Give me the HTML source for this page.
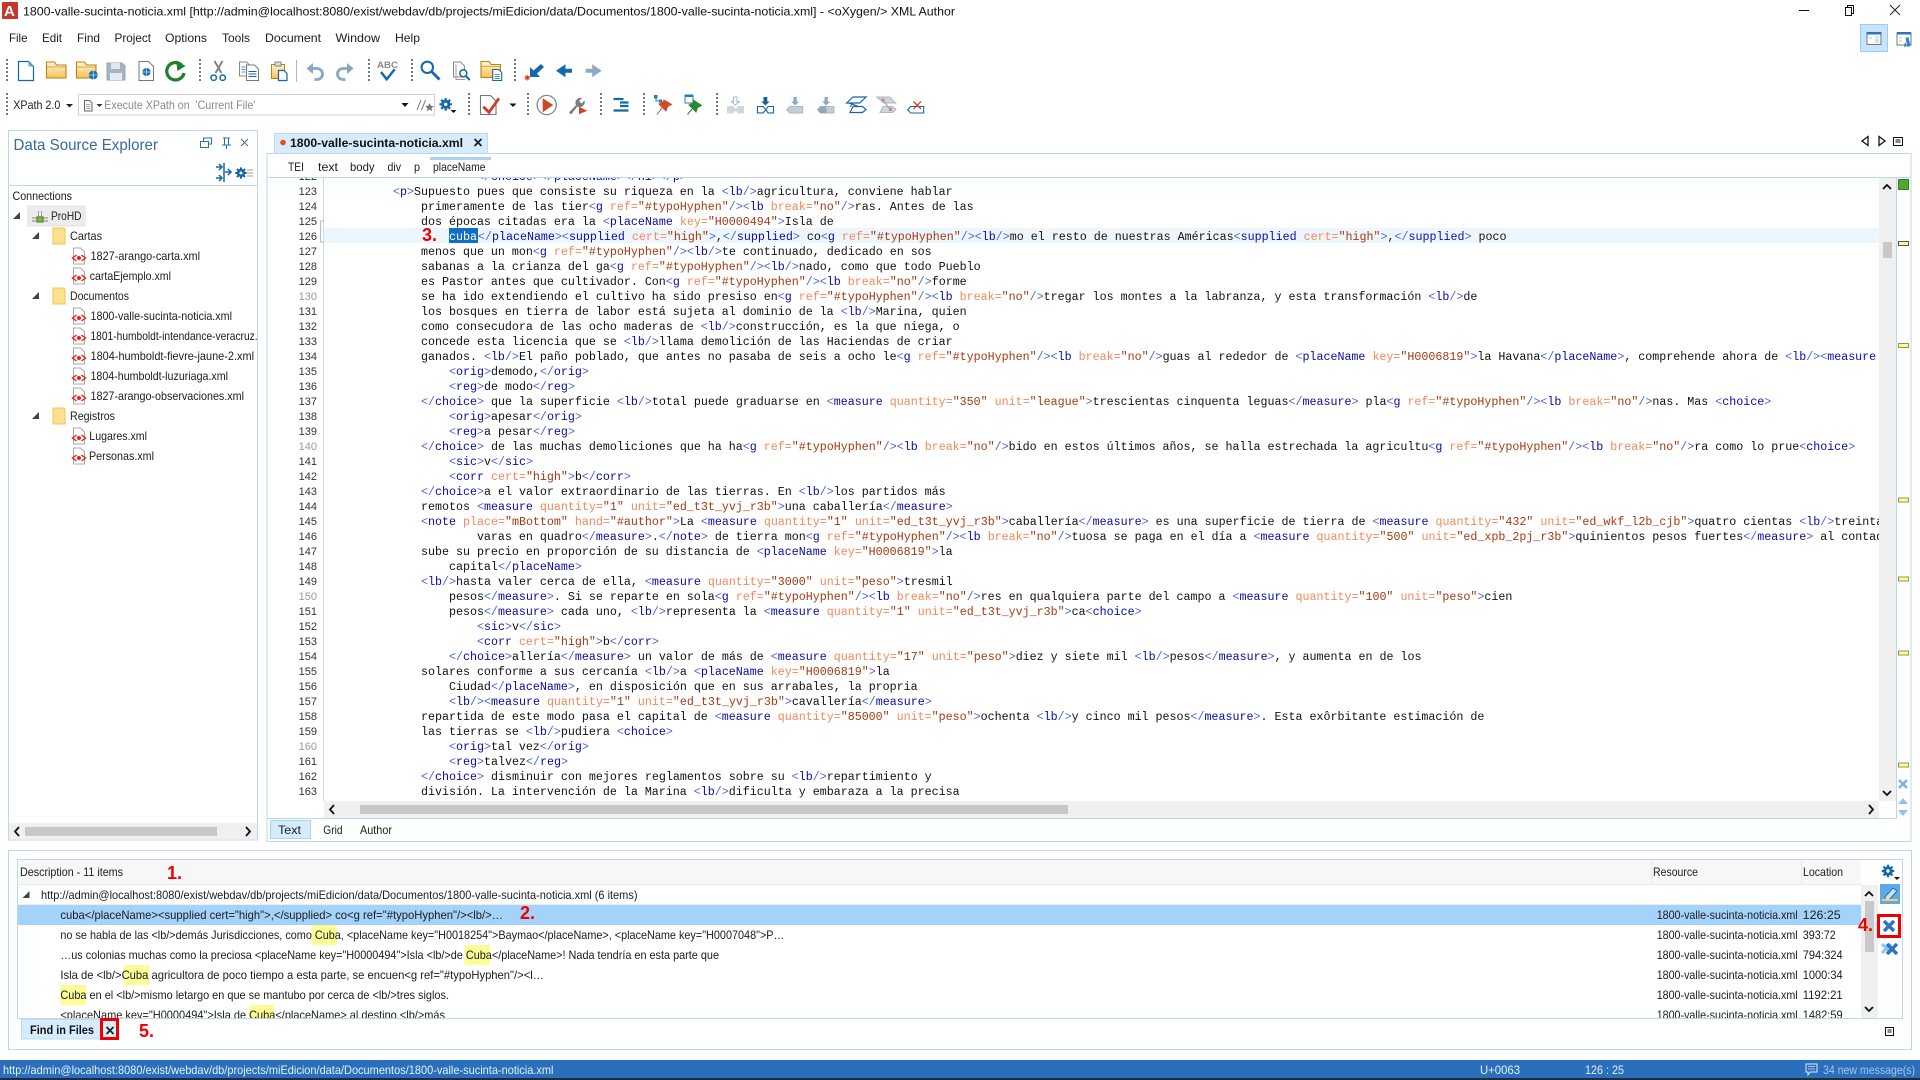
<!DOCTYPE html>
<html><head><meta charset="utf-8"><title>oXygen XML Author</title>
<style>
html,body{margin:0;padding:0;background:#fff;width:1920px;height:1080px;overflow:hidden}
svg{position:absolute;left:0;top:0}
svg text{font-family:"Liberation Sans",sans-serif;font-size:12px;fill:#222;white-space:pre}
.bd{fill:none;stroke:#bcd7ee;stroke-width:1}
.wb text{fill:#1c1c1c}
#code,#nums{position:absolute;top:178px;height:623px;overflow:hidden}
#code{left:324px;width:1555px;font:11.67px/19px "Liberation Mono",monospace;color:#111}
#code>div{height:15px;padding-left:69px;white-space:pre}
#cur{position:absolute;left:0;top:50px;width:1555px;height:15px;background:#eef6fd;padding:0!important}
#code>div.f{margin-top:-10px}
#code div{position:relative}
#code>#cur{position:absolute}
#code u,#code b,#code i,#code s{text-decoration:none;font-weight:normal;font-style:normal}
#code u{color:#4a66d6}#code b{color:#0a0aa8}#code i{color:#f5875a}#code s{color:#a33a12}
#code em{font-style:normal;background:#0f6fc6;color:#fff;display:inline-block;height:15px;width:29px;line-height:19px;vertical-align:top}
#nums{left:267px;width:50px;font:11px/18px "Liberation Sans",sans-serif;color:#333;text-align:right}
#nums div{height:15px}#nums div.f{margin-top:-10px}#nums .g{color:#999}
</style></head><body>

<svg width="1920" height="1080" viewBox="0 0 1920 1080">
<defs>
<linearGradient id="fg" x1="0" y1="0" x2="0" y2="1"><stop offset="0" stop-color="#fff4d6"/><stop offset="1" stop-color="#f6c25a"/></linearGradient>
<clipPath id="ct"><rect x="9" y="186" width="248" height="637"/></clipPath>
<g id="grip"><path d="M0 0V22" stroke="#777" stroke-width="2" stroke-dasharray="2 2" fill="none"/></g>
<g id="folder"><path d="M-9.500-8.500h8l2 3h9.500v13h-19.500z" fill="url(#fg)" stroke="#b8860b" stroke-width="1.100"/><path d="M-9-3.500h18.500" stroke="#c99a2a" stroke-width=".8"/></g>
<g id="tfold"><path d="M-6-8h11l1 1v15h-12z" fill="#fde08e" stroke="#efc552"/></g>
<g id="xf"><path d="M-5-8h7l4 4v12h-11z" fill="#fff" stroke="#a8a8a8"/><path d="M-2-1l-4 3 4 3M3-1l4 3-4 3" fill="none" stroke="#e8201c" stroke-width="1.400"/><circle cx="0.500" cy="2" r="2" fill="#e8201c"/></g>
<g id="tri"><path d="M-4 3h7v-7z" fill="#444"/></g>
<g id="glob"><circle r="4.500" fill="#1f6cb0"/><path d="M-4.500 0h9M0-4.500v9" stroke="#bfe0f7" stroke-width=".8"/></g>
<g id="xb"><path d="M-5-5L5 5M5-5L-5 5" stroke="#2f74c0" stroke-width="3.400"/></g>
<g id="gear"><path d="M0-6.300V6.300M-6.300 0H6.300M-4.500-4.500L4.500 4.500M4.500-4.500L-4.500 4.500" stroke="#1468a8" stroke-width="2.200"/><circle r="4.600" fill="#1468a8"/><circle r="1.700" fill="#fff"/></g>
</defs>

<!-- title bar -->
<rect x="2" y="2" width="16" height="17" fill="#c8352a" rx="1"/>
<text x="4" y="16" style="font-size:15px;font-weight:bold;fill:#fff">A</text>
<text x="23" y="15.500" textLength="932" lengthAdjust="spacingAndGlyphs" style="fill:#111">1800-valle-sucinta-noticia.xml [http://admin@localhost:8080/exist/webdav/db/projects/miEdicion/data/Documentos/1800-valle-sucinta-noticia.xml] - &lt;oXygen/&gt; XML Author</text>
<path d="M1799 10.500h10" stroke="#111"/>
<path d="M1845.500 7.500h6v8h-6zM1847.500 7.500v-2h6v8h-2" fill="none" stroke="#111"/>
<path d="M1890 5l10 10M1900 5l-10 10" stroke="#222"/>

<!-- menu -->
<g class="wb">
<text x="9" y="42" textLength="18.500" lengthAdjust="spacingAndGlyphs">File</text>
<text x="42" y="42" textLength="20" lengthAdjust="spacingAndGlyphs">Edit</text>
<text x="77" y="42" textLength="23" lengthAdjust="spacingAndGlyphs">Find</text>
<text x="114.500" y="42" textLength="36.500" lengthAdjust="spacingAndGlyphs">Project</text>
<text x="165" y="42" textLength="42" lengthAdjust="spacingAndGlyphs">Options</text>
<text x="222" y="42" textLength="28" lengthAdjust="spacingAndGlyphs">Tools</text>
<text x="265" y="42" textLength="56" lengthAdjust="spacingAndGlyphs">Document</text>
<text x="335.500" y="42" textLength="44.500" lengthAdjust="spacingAndGlyphs">Window</text>
<text x="395" y="42" textLength="25" lengthAdjust="spacingAndGlyphs">Help</text>
</g>

<!-- toolbar 1 -->
<use href="#grip" x="7" y="59"/><use href="#grip" x="200" y="59"/><use href="#grip" x="369" y="59"/><use href="#grip" x="412" y="59"/><use href="#grip" x="515" y="59"/>
<path d="M296.500 60v22" stroke="#b5b5b5"/>
<path d="M18.500 61.500h10l5 5v14h-15z" fill="#fff" stroke="#1468a8" stroke-width="1.200"/><path d="M28.500 61.500v5h5z" fill="#6fa8d6"/>
<use href="#folder" x="56" y="70.500"/>
<use href="#folder" x="86" y="70.500"/><use href="#glob" x="93.300" y="75"/>
<path d="M107 63h15l3 3v14h-18z" fill="#a3b4c4" stroke="#94a6b7"/><rect x="111" y="63" width="9" height="6" fill="#dfe6ec"/><rect x="110" y="73" width="12" height="7" fill="#e6ebf0"/>
<path d="M139 61.500h9.500l5 5v14h-14.500z" fill="#fff" stroke="#777"/><use href="#glob" x="146.500" y="72" transform="translate(14.650 7.200) scale(.9)"/>
<path d="M181.500 65a8.700 8.700 0 1 0 2.500 8" fill="none" stroke="#1f7f2e" stroke-width="3.200"/><path d="M176 60.500l9.500 5.500-8 5z" fill="#1f7f2e"/>
<path d="M215.500 73l7-12M221.500 73l-7-12" stroke="#7d7d7d" stroke-width="1.800"/><circle cx="213.700" cy="77.700" r="2.700" fill="none" stroke="#1468a8" stroke-width="1.500"/><circle cx="222.700" cy="77.700" r="2.700" fill="none" stroke="#1468a8" stroke-width="1.500"/>
<path d="M239.500 62h7l3 3v11h-10z" fill="#fff" stroke="#888"/><path d="M241.500 67h4M241.500 69.500h4M241.500 72h4" stroke="#1468a8" stroke-width=".8"/><path d="M246.500 65h8l4 4v11.500h-12z" fill="#fff" stroke="#777"/><path d="M248.500 71.500h8M248.500 74h8M248.500 76.500h8" stroke="#1468a8"/>
<path d="M271.500 64.500h13v14h-13z" fill="url(#fg)" stroke="#b8860b"/><rect x="275" y="62" width="6" height="4" fill="#ddd" stroke="#888"/><path d="M278.500 70.500h5.500l3 3v7h-8.500z" fill="#fff" stroke="#1468a8" stroke-width="1.200"/>
<path d="M310 68.500h6.500a5.500 5.500 0 0 1 1 11h-3" fill="none" stroke="#8aa7bf" stroke-width="2.800"/><path d="M306.500 68.500l6.500-5.500v11z" fill="#8aa7bf"/>
<path d="M350 68.500h-6.500a5.500 5.500 0 0 0-1 11h3" fill="none" stroke="#8aa7bf" stroke-width="2.800"/><path d="M353.500 68.500l-6.500-5.500v11z" fill="#8aa7bf"/>
<text x="377" y="68" style="font-size:9.500px;font-weight:bold;fill:#8a8a8a" textLength="21" lengthAdjust="spacingAndGlyphs">ABC</text>
<path d="M381 72l5.700 7.300 8-10" fill="none" stroke="#1468a8" stroke-width="2.400"/>
<circle cx="427.300" cy="67.300" r="5.700" fill="#fff" stroke="#1468a8" stroke-width="2"/><path d="M431.500 71.500l8 8" stroke="#1468a8" stroke-width="2.800"/>
<path d="M453.500 62h7l4 4v11h-11z" fill="#fff" stroke="#888"/><path d="M456 64.500v15h9" fill="none" stroke="#999"/><circle cx="463.300" cy="73.300" r="3.500" fill="#fff" stroke="#1468a8" stroke-width="1.500"/><path d="M465.800 76l4 4" stroke="#1468a8" stroke-width="2"/>
<use href="#folder" x="490.500" y="70.500" transform="translate(0 -.5)"/><path d="M492.700 69.500h6l3 3v8h-9z" fill="#fff" stroke="#1468a8" stroke-width="1.100"/><path d="M494.700 74.500h5M494.700 76.500h5M494.700 78.500h5" stroke="#1468a8" stroke-width=".8"/>
<path d="M541 64l3 3-7 6.500 3 3.500h-10v-10l3.500 3.500z" fill="#1468a8"/><path d="M524.500 77.700h5.500M527.300 75v5.500M525.300 75.700l4 4M529.300 75.700l-4 4" stroke="#d6392c"/>
<path d="M556 70.700l9.500-6.500v4.500h6.500v4h-6.500v4.500z" fill="#1468a8"/>
<path d="M601.700 70.700l-9.500-6.500v4.500h-6.500v4h6.500v4.500z" fill="#8fa9bf"/>

<!-- perspective buttons -->
<rect x="1860.500" y="24.500" width="27" height="27" fill="#c9e5fd" stroke="#94cffc"/>
<rect x="1867" y="32.500" width="14" height="12" fill="#fff" stroke="#777"/><rect x="1867" y="32" width="14" height="2.500" fill="#2f74c0"/><path d="M1869 38h3M1875 37h4M1875 40h4M1875 42h4" stroke="#9cc7ea"/>
<rect x="1897" y="33" width="14" height="12" fill="#fff" stroke="#777"/><rect x="1897" y="32" width="14" height="2.500" fill="#2f74c0"/><path d="M1899 38h3M1899 41h3" stroke="#9cc7ea"/><path d="M1905.500 38l3-1 2 9-3 1zM1905 42l-1 5 3-1z" fill="#3a7fd0"/>

<!-- toolbar 2 -->
<use href="#grip" x="7" y="93"/>
<text x="13.300" y="109" textLength="47" lengthAdjust="spacingAndGlyphs">XPath 2.0</text>
<path d="M66 104h7l-3.500 3.500z" fill="#222"/>
<rect x="78.500" y="94.500" width="356" height="20.500" fill="#fff" stroke="#d2d2d2"/>
<path d="M84.500 100.500h5l2.500 2.500v8h-7.500z" fill="#fff" stroke="#666"/><path d="M86 104.500h4.500M86 106.500h4.500M86 108.500h4.500" stroke="#888" stroke-width=".7"/>
<path d="M96.500 104h6l-3 3z" fill="#333"/>
<text x="104.300" y="109" textLength="151" lengthAdjust="spacingAndGlyphs" style="fill:#8a8a8a">Execute XPath on  'Current File'</text>
<path d="M401.500 103h7l-3.500 4z" fill="#111"/>
<path d="M417 110l4-10M421.500 110l4-10" stroke="#777"/><path d="M429.500 103l1.300 2.800 3 .3-2.300 2 .7 3-2.700-1.600-2.700 1.600.7-3-2.300-2 3-.3z" fill="#777"/>
<use href="#gear" x="445.700" y="104.300"/><path d="M450.500 110h6l-3 3z" fill="#111"/>
<use href="#grip" x="469" y="93"/><use href="#grip" x="528" y="93"/><use href="#grip" x="601" y="93"/><use href="#grip" x="644" y="93"/><use href="#grip" x="717" y="93"/>
<path d="M480.500 95.500h10l5.500 5.500v13.500h-15.500z" fill="#fff" stroke="#777" stroke-width="1.100"/>
<path d="M483.300 106.700l5.700 5.600 10-14" fill="none" stroke="#d33a2a" stroke-width="2.800"/>
<path d="M509.500 103.500h7l-3.500 3.500z" fill="#111"/>
<circle cx="546.700" cy="105" r="9.600" fill="#fff" stroke="#888" stroke-width="1.300"/><path d="M542.700 98.300l10.600 6.700-10.600 7.300z" fill="#c9482a"/>
<path d="M569 112.500l7-7.500a5 5 0 0 1 6-7l-3 3 2.500 2.500 3-3a5 5 0 0 1-7 6l-6.500 8z" fill="#7d7d7d"/><path d="M579 106.700l8.300 4-8.300 3.600z" fill="#c9482a"/>
<path d="M613.500 99h10M620 102.500h8.500M620 106h8.500M613.500 110.500h15" stroke="#1468a8" stroke-width="2.200"/>
<path d="M654 95h3.500v3.500H654zM659 99.500h3v3h-3z" fill="#2c78b8"/><path d="M656 98v3h3" fill="none" stroke="#2c78b8"/>
<path d="M664 100l7.500 4.500-4 2-1.500 4.500-7-7 3.500-1.500zM662 108l-5 6.500" fill="#d2492a" stroke="#d2492a"/>
<rect x="685" y="95" width="8" height="8" fill="#fff" stroke="#2c78b8"/><path d="M685 95h8v2h-8z" fill="#2c78b8"/>
<path d="M694 100.500l7.500 5-4 2-1.500 4.500-7-7 3.500-1.500zM692 109l-4.500 5.500" fill="#2b8a30" stroke="#2b8a30"/>
<!-- change tracking icons -->
<path d="M733.500 97h3.500v4.500h2.200l-3.900 3.700-3.900-3.700h2.100z" fill="#fff" stroke="#a9b9c6"/>
<path d="M727.500 106.500h5.500l3 3.200-3 3.200h-5.500zM743.500 106.500h-5.500l-2 3.200 2 3.200h5.500z" fill="#cfd8df" stroke="#cfd8df"/>
<path d="M763.500 97h3.800v4.500h2.300l-4.200 4-4.200-4h2.300z" fill="#1c5f97"/>
<path d="M757.500 106.500h5.500l3 3.200-3 3.200h-5.500zM773.500 106.500h-5.500l-2 3.200 2 3.200h5.500z" fill="#fff" stroke="#1468a8" stroke-width="1.100"/>
<path d="M793.500 97h3.300v4.500h2.300l-4 4-4-4h2.400z" fill="#8fa7ba"/>
<path d="M786.700 109.700l3-3.200h13v6.500h-13z" fill="#c3ced7" stroke="#a9b9c6"/>
<path d="M824.500 97h3.300v4.500h2.300l-4 4-4-4h2.400z" fill="#8fa7ba"/>
<path d="M817.500 109.700l3-3.200h13.500v6.500h-13.500z" fill="#c3ced7" stroke="#a9b9c6"/><path d="M817.500 109.700l3-3.200h6v6.500h-6z" fill="#8fa7ba"/>
<path d="M846.700 103h13l6.300-6h-13zM849 103l10 3.700M853 106.500h9.500l3.500 3-3.500 3H850z" fill="none" stroke="#1468a8" stroke-width="1.200"/><path d="M853 103l-3 4" stroke="#1468a8"/>
<path d="M876.700 97h13l6 6h-12zM883 106.500h9.500l3.500 3-3.500 3H880z" fill="#cdd6dd" stroke="#a9b9c6"/><path d="M883 100l7.500 10" stroke="#c99" stroke-width="1.200"/><rect x="881.500" y="98.500" width="3" height="3" fill="#bf8c82"/><rect x="889" y="108" width="3" height="3" fill="#bf8c82"/>
<path d="M907.700 109.700l3-3.200h13v6.500h-13z" fill="#fff" stroke="#1468a8" stroke-width="1.100"/><path d="M913.500 101.500l7.500 7.500M921 101.500l-7.500 7.500" stroke="#d9402c" stroke-width="1.300"/>

<!-- Data Source Explorer -->
<rect class="bd" x="8.500" y="130.500" width="249" height="709.500"/>
<path d="M9 185.500h248" stroke="#bcd7ee"/>
<text x="13.500" y="150" textLength="144.500" lengthAdjust="spacingAndGlyphs" style="font-size:16px;fill:#356a9b">Data Source Explorer</text>
<path d="M200.500 141.500h8v6h-8zM203.500 141v-3h8v6h-3" fill="none" stroke="#2f6ea5"/>
<path d="M223 138h7M224.500 138v7h4v-7M222 145h9M226.500 145v4" fill="none" stroke="#2f6ea5"/>
<path d="M241 139l7 7M248 139l-7 7" stroke="#3f6f98"/>
<path d="M216 167h6M219 164l3 3-3 3M216 178h6M219 175l3 3-3 3M224 163v19" fill="none" stroke="#1468a8" stroke-width="1.500"/><path d="M225 172h5M228 169l3 3-3 3" fill="none" stroke="#1468a8" stroke-width="1.500"/>
<use href="#gear" x="241" y="173" transform="translate(24.100 17.300) scale(.9)"/><path d="M247 170h6M247 173h6M247 176h6" stroke="#999"/>
<g class="wb" clip-path="url(#ct)">
<text x="12.500" y="200" textLength="59.500" lengthAdjust="spacingAndGlyphs">Connections</text>
<rect x="28" y="206" width="57" height="20" fill="#ececec" stroke="#e2e2e2"/>
<use href="#tri" x="17" y="216"/><use href="#tri" x="36" y="236"/><use href="#tri" x="36" y="296"/><use href="#tri" x="36" y="416"/>
<path d="M32 218h16M32 221h16" stroke="#999" stroke-width="1.200"/><path d="M38.500 211v7M41.500 211v7" stroke="#999"/><rect x="37" y="217" width="6" height="5" fill="#8ab045" stroke="#4f7a1a"/>
<text x="51" y="220" textLength="30.500" lengthAdjust="spacingAndGlyphs">ProHD</text>
<use href="#tfold" x="59" y="236"/><text x="70" y="240" textLength="32" lengthAdjust="spacingAndGlyphs">Cartas</text>
<use href="#xf" x="78.500" y="256"/><text x="90.500" y="260" textLength="109.500" lengthAdjust="spacingAndGlyphs">1827-arango-carta.xml</text>
<use href="#xf" x="78.500" y="276"/><text x="89.700" y="280" textLength="81.300" lengthAdjust="spacingAndGlyphs">cartaEjemplo.xml</text>
<use href="#tfold" x="59" y="296"/><text x="70" y="300" textLength="59" lengthAdjust="spacingAndGlyphs">Documentos</text>
<use href="#xf" x="78.500" y="316"/><text x="90.500" y="320" textLength="141.500" lengthAdjust="spacingAndGlyphs">1800-valle-sucinta-noticia.xml</text>
<use href="#xf" x="78.500" y="336"/><text x="90.500" y="340" textLength="183" lengthAdjust="spacingAndGlyphs">1801-humboldt-intendance-veracruz.xml</text>
<use href="#xf" x="78.500" y="356"/><text x="90.500" y="360" textLength="163.500" lengthAdjust="spacingAndGlyphs">1804-humboldt-fievre-jaune-2.xml</text>
<use href="#xf" x="78.500" y="376"/><text x="90.500" y="380" textLength="137.500" lengthAdjust="spacingAndGlyphs">1804-humboldt-luzuriaga.xml</text>
<use href="#xf" x="78.500" y="396"/><text x="90.500" y="400" textLength="153.500" lengthAdjust="spacingAndGlyphs">1827-arango-observaciones.xml</text>
<use href="#tfold" x="59" y="416"/><text x="70" y="420" textLength="45" lengthAdjust="spacingAndGlyphs">Registros</text>
<use href="#xf" x="78.500" y="436"/><text x="89.300" y="440" textLength="57.700" lengthAdjust="spacingAndGlyphs">Lugares.xml</text>
<use href="#xf" x="78.500" y="456"/><text x="89" y="460" textLength="65" lengthAdjust="spacingAndGlyphs">Personas.xml</text>
</g>
<rect x="9" y="823" width="248" height="16" fill="#f0f0f0"/><rect x="25" y="827" width="192" height="9" fill="#c8c8c8"/>
<path d="M19 827l-4 4.500 4 4.500M246 827l4 4.500-4 4.500" fill="none" stroke="#111" stroke-width="1.800"/>

<!-- Editor frame -->
<rect x="274.500" y="133.500" width="213" height="20" fill="#d6ecfd" stroke="#bcdcf5"/>
<circle cx="283" cy="142.500" r="2.800" fill="#ee4a1a"/>
<text x="290" y="147" textLength="173" lengthAdjust="spacingAndGlyphs" style="font-weight:bold;fill:#111">1800-valle-sucinta-noticia.xml</text>
<path d="M474.500 139l7 7M481.500 139l-7 7" stroke="#222" stroke-width="1.800"/>
<path d="M1862 141l6-4.500v9zM1879 136.500v9l6-4.500z" fill="none" stroke="#111" stroke-width="1.300"/>
<path d="M1893.500 137.500h9v8h-9zM1895.500 140h5M1895.500 142h5" fill="none" stroke="#111"/>
<rect class="bd" x="267" y="153.500" width="1644" height="688"/>
<path d="M267 177.500h1644" stroke="#bcd7ee"/>
<g class="wb">
<text x="288" y="171" textLength="16" lengthAdjust="spacingAndGlyphs">TEI</text>
<text x="318" y="171" textLength="20" lengthAdjust="spacingAndGlyphs">text</text>
<text x="350" y="171" textLength="24.500" lengthAdjust="spacingAndGlyphs">body</text>
<text x="387.500" y="171" textLength="13.500" lengthAdjust="spacingAndGlyphs">div</text>
<text x="414" y="171" textLength="6" lengthAdjust="spacingAndGlyphs">p</text>
<text x="433" y="171" textLength="52.500" lengthAdjust="spacingAndGlyphs">placeName</text>
</g>
<rect x="430" y="157" width="61" height="3" fill="#a9d3f5"/>
<path d="M323.500 178V801" stroke="#c8dcee"/>
<path d="M324 221h-3.500v21h3.500" fill="none" stroke="#bbb"/>

<!-- editor scrollbars -->
<rect x="1879" y="178" width="17" height="623" fill="#f0f0f0"/>
<rect x="1883" y="242" width="9" height="16" fill="#c8c8c8"/>
<path d="M1883 189l4-4 4 4M1883 791l4 4 4-4" fill="none" stroke="#111" stroke-width="1.800"/>
<rect x="324" y="801" width="1555" height="17" fill="#f0f0f0"/>
<rect x="360" y="805" width="708" height="9" fill="#c8c8c8"/>
<path d="M334 805l-4 4.500 4 4.500M1869 805l4 4.500-4 4.500" fill="none" stroke="#111" stroke-width="1.800"/>
<path d="M1896.500 178V818M267 818.500H1897" stroke="#bcd7ee"/>
<rect x="1898.500" y="179.500" width="10" height="10" fill="#4fa92a" stroke="#3a7d1e"/>
<g fill="#fdf8a0" stroke="#9a9340">
<rect x="1898.500" y="241.500" width="10" height="4" stroke="#555"/>
<rect x="1898.500" y="343.500" width="10" height="4"/>
<rect x="1898.500" y="498" width="10" height="4"/>
<rect x="1898.500" y="577" width="10" height="4"/>
<rect x="1898.500" y="651" width="10" height="4"/>
<rect x="1898.500" y="763" width="10" height="4"/>
</g>
<path d="M1899 780l8 8M1907 780l-8 8" stroke="#7cb2e6" stroke-width="2.400"/>
<path d="M1898 804l5-6 5 6z" fill="#8cc2f0"/><path d="M1898 810l5 6 5-6z" fill="#8cc2f0"/>

<!-- bottom tabs -->
<rect x="270.500" y="820.500" width="40" height="18" fill="#d6ecfd" stroke="#a9d3f5"/>
<g class="wb">
<text x="278" y="834" textLength="23" lengthAdjust="spacingAndGlyphs">Text</text>
<text x="323.300" y="834" textLength="19.200" lengthAdjust="spacingAndGlyphs">Grid</text>
<text x="360" y="834" textLength="32" lengthAdjust="spacingAndGlyphs">Author</text>
</g>

<!-- results panel -->
<rect class="bd" x="8.500" y="850.500" width="1903" height="199"/>
<rect class="bd" x="17.500" y="859.500" width="1885" height="159"/>
<rect x="18" y="860" width="1843" height="24" fill="#f7f7f7"/>
<path d="M18 884.500H1861M1651.500 860v24M1801.500 860v24" stroke="#eaeaea"/>
<path d="M18 904.500H1861" stroke="#eee"/>
<rect x="18" y="905" width="1843" height="20" fill="#a3d3fb"/>
<g fill="#fdfd96">
<rect x="311.500" y="925" width="25.500" height="20"/>
<rect x="464.500" y="945" width="25.500" height="20"/>
<rect x="123.700" y="965" width="25.300" height="20"/>
<rect x="60.400" y="985" width="25.600" height="20"/>
<rect x="249" y="1005" width="25" height="13"/>
</g>
<g class="wb">
<text x="20" y="876" textLength="103" lengthAdjust="spacingAndGlyphs">Description - 11 items</text>
<text x="1653" y="876" textLength="45" lengthAdjust="spacingAndGlyphs">Resource</text>
<text x="1803" y="876" textLength="40" lengthAdjust="spacingAndGlyphs">Location</text>
<use href="#tri" x="26.500" y="895"/>
<text x="41" y="899" textLength="596.500" lengthAdjust="spacingAndGlyphs">http://admin@localhost:8080/exist/webdav/db/projects/miEdicion/data/Documentos/1800-valle-sucinta-noticia.xml (6 items)</text>
<text x="60.400" y="919" textLength="442.600" lengthAdjust="spacingAndGlyphs">cuba&lt;/placeName&gt;&lt;supplied cert="high"&gt;,&lt;/supplied&gt; co&lt;g ref="#typoHyphen"/&gt;&lt;lb/&gt;…</text>
<text x="60.400" y="939" textLength="724" lengthAdjust="spacingAndGlyphs">no se habla de las &lt;lb/&gt;demás Jurisdicciones, como Cuba, &lt;placeName key="H0018254"&gt;Baymao&lt;/placeName&gt;, &lt;placeName key="H0007048"&gt;P…</text>
<text x="60.400" y="959" textLength="658.600" lengthAdjust="spacingAndGlyphs">…us colonias muchas como la preciosa &lt;placeName key="H0000494"&gt;Isla &lt;lb/&gt;de Cuba&lt;/placeName&gt;! Nada tendría en esta parte que</text>
<text x="60.400" y="979" textLength="483.600" lengthAdjust="spacingAndGlyphs">Isla de &lt;lb/&gt;Cuba agricultora de poco tiempo a esta parte, se encuen&lt;g ref="#typoHyphen"/&gt;&lt;l…</text>
<text x="60.400" y="999" textLength="388.600" lengthAdjust="spacingAndGlyphs">Cuba en el &lt;lb/&gt;mismo letargo en que se mantubo por cerca de &lt;lb/&gt;tres siglos.</text>
<text x="60.400" y="1019" textLength="384.600" lengthAdjust="spacingAndGlyphs">&lt;placeName key="H0000494"&gt;Isla de Cuba&lt;/placeName&gt; al destino &lt;lb/&gt;más</text>
<text x="1656.700" y="919" textLength="141" lengthAdjust="spacingAndGlyphs">1800-valle-sucinta-noticia.xml</text><text x="1802.700" y="919" textLength="38" lengthAdjust="spacingAndGlyphs">126:25</text>
<text x="1656.700" y="939" textLength="141" lengthAdjust="spacingAndGlyphs">1800-valle-sucinta-noticia.xml</text><text x="1802.700" y="939" textLength="33" lengthAdjust="spacingAndGlyphs">393:72</text>
<text x="1656.700" y="959" textLength="141" lengthAdjust="spacingAndGlyphs">1800-valle-sucinta-noticia.xml</text><text x="1802.700" y="959" textLength="40" lengthAdjust="spacingAndGlyphs">794:324</text>
<text x="1656.700" y="979" textLength="141" lengthAdjust="spacingAndGlyphs">1800-valle-sucinta-noticia.xml</text><text x="1802.700" y="979" textLength="40" lengthAdjust="spacingAndGlyphs">1000:34</text>
<text x="1656.700" y="999" textLength="141" lengthAdjust="spacingAndGlyphs">1800-valle-sucinta-noticia.xml</text><text x="1802.700" y="999" textLength="40" lengthAdjust="spacingAndGlyphs">1192:21</text>
<text x="1656.700" y="1019" textLength="141" lengthAdjust="spacingAndGlyphs">1800-valle-sucinta-noticia.xml</text><text x="1802.700" y="1019" textLength="40" lengthAdjust="spacingAndGlyphs">1482:59</text>
</g>
<rect x="18" y="1018" width="1884" height="1" fill="#bcd7ee"/>
<rect x="18" y="1019" width="1884" height="30" fill="#fff"/>
<!-- results scrollbar -->
<rect x="1861" y="885" width="17" height="133" fill="#f0f0f0"/>
<rect x="1865" y="901" width="9" height="51" fill="#c8c8c8"/>
<path d="M1865 896l4-4 4 4M1865 1007l4 4 4-4" fill="none" stroke="#111" stroke-width="1.800"/>
<use href="#gear" x="1888" y="871"/><path d="M1894 877h6l-3 3z" fill="#111"/>
<rect x="1880" y="884" width="20" height="20" fill="#5ea9e8"/><path d="M1885 897l8-9 4 3-8 9h-4z" fill="#c9e2f7" stroke="#2a6ea8"/><rect x="1882" y="899" width="16" height="2" fill="#f2d64a"/>
<use href="#xb" x="1889" y="926"/>
<rect x="1878.500" y="915.500" width="21" height="21" fill="none" stroke="#ee0000" stroke-width="3"/>
<path d="M1882 944l9 9M1891 944l-9 9" stroke="#8cc2f0" stroke-width="3"/><use href="#xb" x="1892" y="949"/>
<path d="M1885.500 1027.500h8v8h-8zM1887.500 1030h4M1887.500 1032h4" fill="none" stroke="#111"/>
<!-- find tab -->
<rect x="21.500" y="1019.500" width="97" height="19.500" fill="#d6ecfd" stroke="#bcdcf5"/>
<text x="30" y="1034" textLength="64" lengthAdjust="spacingAndGlyphs" style="font-weight:bold;fill:#111">Find in Files</text>
<path d="M106.500 1027l7 7M113.500 1027l-7 7" stroke="#222" stroke-width="1.800"/>
<rect x="101.500" y="1019.500" width="16" height="19" fill="none" stroke="#ee0000" stroke-width="3"/>

<!-- red labels -->
<text x="167" y="879" style="font-size:18px;font-weight:bold;fill:#ee0000" textLength="15">1.</text>
<text x="520" y="919" style="font-size:18px;font-weight:bold;fill:#ee0000" textLength="15">2.</text>
<text x="1858" y="931" style="font-size:18px;font-weight:bold;fill:#ee0000" textLength="15">4.</text>
<text x="139" y="1037" style="font-size:18px;font-weight:bold;fill:#ee0000" textLength="15">5.</text>

<!-- status bar -->
<rect x="0" y="1060" width="1920" height="18" fill="#2a6fbb"/>
<rect x="0" y="1078" width="1920" height="2" fill="#1a2c3e"/>
<text x="3" y="1074" textLength="550.500" lengthAdjust="spacingAndGlyphs" style="fill:#e6eff8">http://admin@localhost:8080/exist/webdav/db/projects/miEdicion/data/Documentos/1800-valle-sucinta-noticia.xml</text>
<text x="1480" y="1074" textLength="40" lengthAdjust="spacingAndGlyphs" style="fill:#e6eff8">U+0063</text>
<text x="1585" y="1074" textLength="39" lengthAdjust="spacingAndGlyphs" style="fill:#e6eff8">126 : 25</text>
<path d="M1806 1064h11v8h-7l-2 3v-3h-2z" fill="none" stroke="#dce9f5"/><path d="M1808 1066.500h7M1808 1069h7" stroke="#dce9f5" stroke-width=".8"/>
<text x="1823" y="1074" textLength="92" lengthAdjust="spacingAndGlyphs" style="fill:#a8c6e4">34 new message(s)</text>
</svg>

<div id="nums"><div class="f">122</div><div>123</div><div>124</div><div>125</div><div>126</div><div>127</div><div>128</div><div>129</div><div class="g">130</div><div>131</div><div>132</div><div>133</div><div>134</div><div>135</div><div>136</div><div>137</div><div>138</div><div>139</div><div class="g">140</div><div>141</div><div>142</div><div>143</div><div>144</div><div>145</div><div>146</div><div>147</div><div>148</div><div>149</div><div class="g">150</div><div>151</div><div>152</div><div>153</div><div>154</div><div>155</div><div>156</div><div>157</div><div>158</div><div>159</div><div class="g">160</div><div>161</div><div>162</div><div>163</div></div>

<div id="code"><div id="cur"></div>
<div class="f">            <u>&lt;/<b>choice</b>&gt;&lt;/<b>placeName</b>&gt;&lt;/<b>hi</b>&gt;&lt;/<b>p</b>&gt;</u></div>
<div><u>&lt;<b>p</b>&gt;</u>Supuesto pues que consiste su riqueza en la <u>&lt;<b>lb</b>/&gt;</u>agricultura, conviene hablar</div>
<div>    primeramente de las tier<u>&lt;<b>g</b> <i>ref=</i><s>"#typoHyphen"</s>/&gt;&lt;<b>lb</b> <i>break=</i><s>"no"</s>/&gt;</u>ras. Antes de las</div>
<div>    dos épocas citadas era la <u>&lt;<b>placeName</b> <i>key=</i><s>"H0000494"</s>&gt;</u>Isla de</div>
<div>        <em>cuba</em><u>&lt;/<b>placeName</b>&gt;&lt;<b>supplied</b> <i>cert=</i><s>"high"</s>&gt;</u>,<u>&lt;/<b>supplied</b>&gt;</u> co<u>&lt;<b>g</b> <i>ref=</i><s>"#typoHyphen"</s>/&gt;&lt;<b>lb</b>/&gt;</u>mo el resto de nuestras Américas<u>&lt;<b>supplied</b> <i>cert=</i><s>"high"</s>&gt;</u>,<u>&lt;/<b>supplied</b>&gt;</u> poco</div>
<div>    menos que un mon<u>&lt;<b>g</b> <i>ref=</i><s>"#typoHyphen"</s>/&gt;&lt;<b>lb</b>/&gt;</u>te continuado, dedicado en sos</div>
<div>    sabanas a la crianza del ga<u>&lt;<b>g</b> <i>ref=</i><s>"#typoHyphen"</s>/&gt;&lt;<b>lb</b>/&gt;</u>nado, como que todo Pueblo</div>
<div>    es Pastor antes que cultivador. Con<u>&lt;<b>g</b> <i>ref=</i><s>"#typoHyphen"</s>/&gt;&lt;<b>lb</b> <i>break=</i><s>"no"</s>/&gt;</u>forme</div>
<div>    se ha ido extendiendo el cultivo ha sido presiso en<u>&lt;<b>g</b> <i>ref=</i><s>"#typoHyphen"</s>/&gt;&lt;<b>lb</b> <i>break=</i><s>"no"</s>/&gt;</u>tregar los montes a la labranza, y esta transformación <u>&lt;<b>lb</b>/&gt;</u>de</div>
<div>    los bosques en tierra de labor está sujeta al dominio de la <u>&lt;<b>lb</b>/&gt;</u>Marina, quien</div>
<div>    como consecudora de las ocho maderas de <u>&lt;<b>lb</b>/&gt;</u>construcción, es la que niega, o</div>
<div>    concede esta licencia que se <u>&lt;<b>lb</b>/&gt;</u>llama demolición de las Haciendas de criar</div>
<div>    ganados. <u>&lt;<b>lb</b>/&gt;</u>El paño poblado, que antes no pasaba de seis a ocho le<u>&lt;<b>g</b> <i>ref=</i><s>"#typoHyphen"</s>/&gt;&lt;<b>lb</b> <i>break=</i><s>"no"</s>/&gt;</u>guas al rededor de <u>&lt;<b>placeName</b> <i>key=</i><s>"H0006819"</s>&gt;</u>la Havana<u>&lt;/<b>placeName</b>&gt;</u>, comprehende ahora de <u>&lt;<b>lb</b>/&gt;&lt;<b>measure</b></u></div>
<div>        <u>&lt;<b>orig</b>&gt;</u>demodo,<u>&lt;/<b>orig</b>&gt;</u></div>
<div>        <u>&lt;<b>reg</b>&gt;</u>de modo<u>&lt;/<b>reg</b>&gt;</u></div>
<div>    <u>&lt;/<b>choice</b>&gt;</u> que la superficie <u>&lt;<b>lb</b>/&gt;</u>total puede graduarse en <u>&lt;<b>measure</b> <i>quantity=</i><s>"350"</s> <i>unit=</i><s>"league"</s>&gt;</u>trescientas cinquenta leguas<u>&lt;/<b>measure</b>&gt;</u> pla<u>&lt;<b>g</b> <i>ref=</i><s>"#typoHyphen"</s>/&gt;&lt;<b>lb</b> <i>break=</i><s>"no"</s>/&gt;</u>nas. Mas <u>&lt;<b>choice</b>&gt;</u></div>
<div>        <u>&lt;<b>orig</b>&gt;</u>apesar<u>&lt;/<b>orig</b>&gt;</u></div>
<div>        <u>&lt;<b>reg</b>&gt;</u>a pesar<u>&lt;/<b>reg</b>&gt;</u></div>
<div>    <u>&lt;/<b>choice</b>&gt;</u> de las muchas demoliciones que ha ha<u>&lt;<b>g</b> <i>ref=</i><s>"#typoHyphen"</s>/&gt;&lt;<b>lb</b> <i>break=</i><s>"no"</s>/&gt;</u>bido en estos últimos años, se halla estrechada la agricultu<u>&lt;<b>g</b> <i>ref=</i><s>"#typoHyphen"</s>/&gt;&lt;<b>lb</b> <i>break=</i><s>"no"</s>/&gt;</u>ra como lo prue<u>&lt;<b>choice</b>&gt;</u></div>
<div>        <u>&lt;<b>sic</b>&gt;</u>v<u>&lt;/<b>sic</b>&gt;</u></div>
<div>        <u>&lt;<b>corr</b> <i>cert=</i><s>"high"</s>&gt;</u>b<u>&lt;/<b>corr</b>&gt;</u></div>
<div>    <u>&lt;/<b>choice</b>&gt;</u>a el valor extraordinario de las tierras. En <u>&lt;<b>lb</b>/&gt;</u>los partidos más</div>
<div>    remotos <u>&lt;<b>measure</b> <i>quantity=</i><s>"1"</s> <i>unit=</i><s>"ed_t3t_yvj_r3b"</s>&gt;</u>una caballería<u>&lt;/<b>measure</b>&gt;</u></div>
<div>    <u>&lt;<b>note</b> <i>place=</i><s>"mBottom"</s> <i>hand=</i><s>"#author"</s>&gt;</u>La <u>&lt;<b>measure</b> <i>quantity=</i><s>"1"</s> <i>unit=</i><s>"ed_t3t_yvj_r3b"</s>&gt;</u>caballería<u>&lt;/<b>measure</b>&gt;</u> es una superficie de tierra de <u>&lt;<b>measure</b> <i>quantity=</i><s>"432"</s> <i>unit=</i><s>"ed_wkf_l2b_cjb"</s>&gt;</u>quatro cientas <u>&lt;<b>lb</b>/&gt;</u>treinta</div>
<div>            varas en quadro<u>&lt;/<b>measure</b>&gt;</u>.<u>&lt;/<b>note</b>&gt;</u> de tierra mon<u>&lt;<b>g</b> <i>ref=</i><s>"#typoHyphen"</s>/&gt;&lt;<b>lb</b> <i>break=</i><s>"no"</s>/&gt;</u>tuosa se paga en el día a <u>&lt;<b>measure</b> <i>quantity=</i><s>"500"</s> <i>unit=</i><s>"ed_xpb_2pj_r3b"</s>&gt;</u>quinientos pesos fuertes<u>&lt;/<b>measure</b>&gt;</u> al contado</div>
<div>    sube su precio en proporción de su distancia de <u>&lt;<b>placeName</b> <i>key=</i><s>"H0006819"</s>&gt;</u>la</div>
<div>        capital<u>&lt;/<b>placeName</b>&gt;</u></div>
<div>    <u>&lt;<b>lb</b>/&gt;</u>hasta valer cerca de ella, <u>&lt;<b>measure</b> <i>quantity=</i><s>"3000"</s> <i>unit=</i><s>"peso"</s>&gt;</u>tresmil</div>
<div>        pesos<u>&lt;/<b>measure</b>&gt;</u>. Si se reparte en sola<u>&lt;<b>g</b> <i>ref=</i><s>"#typoHyphen"</s>/&gt;&lt;<b>lb</b> <i>break=</i><s>"no"</s>/&gt;</u>res en qualquiera parte del campo a <u>&lt;<b>measure</b> <i>quantity=</i><s>"100"</s> <i>unit=</i><s>"peso"</s>&gt;</u>cien</div>
<div>        pesos<u>&lt;/<b>measure</b>&gt;</u> cada uno, <u>&lt;<b>lb</b>/&gt;</u>representa la <u>&lt;<b>measure</b> <i>quantity=</i><s>"1"</s> <i>unit=</i><s>"ed_t3t_yvj_r3b"</s>&gt;</u>ca<u>&lt;<b>choice</b>&gt;</u></div>
<div>            <u>&lt;<b>sic</b>&gt;</u>v<u>&lt;/<b>sic</b>&gt;</u></div>
<div>            <u>&lt;<b>corr</b> <i>cert=</i><s>"high"</s>&gt;</u>b<u>&lt;/<b>corr</b>&gt;</u></div>
<div>        <u>&lt;/<b>choice</b>&gt;</u>allería<u>&lt;/<b>measure</b>&gt;</u> un valor de más de <u>&lt;<b>measure</b> <i>quantity=</i><s>"17"</s> <i>unit=</i><s>"peso"</s>&gt;</u>diez y siete mil <u>&lt;<b>lb</b>/&gt;</u>pesos<u>&lt;/<b>measure</b>&gt;</u>, y aumenta en de los</div>
<div>    solares conforme a sus cercanía <u>&lt;<b>lb</b>/&gt;</u>a <u>&lt;<b>placeName</b> <i>key=</i><s>"H0006819"</s>&gt;</u>la</div>
<div>        Ciudad<u>&lt;/<b>placeName</b>&gt;</u>, en disposición que en sus arrabales, la propria</div>
<div>        <u>&lt;<b>lb</b>/&gt;&lt;<b>measure</b> <i>quantity=</i><s>"1"</s> <i>unit=</i><s>"ed_t3t_yvj_r3b"</s>&gt;</u>cavallería<u>&lt;/<b>measure</b>&gt;</u></div>
<div>    repartida de este modo pasa el capital de <u>&lt;<b>measure</b> <i>quantity=</i><s>"85000"</s> <i>unit=</i><s>"peso"</s>&gt;</u>ochenta <u>&lt;<b>lb</b>/&gt;</u>y cinco mil pesos<u>&lt;/<b>measure</b>&gt;</u>. Esta exôrbitante estimación de</div>
<div>    las tierras se <u>&lt;<b>lb</b>/&gt;</u>pudiera <u>&lt;<b>choice</b>&gt;</u></div>
<div>        <u>&lt;<b>orig</b>&gt;</u>tal vez<u>&lt;/<b>orig</b>&gt;</u></div>
<div>        <u>&lt;<b>reg</b>&gt;</u>talvez<u>&lt;/<b>reg</b>&gt;</u></div>
<div>    <u>&lt;/<b>choice</b>&gt;</u> disminuir con mejores reglamentos sobre su <u>&lt;<b>lb</b>/&gt;</u>repartimiento y</div>
<div>    división. La intervención de la Marina <u>&lt;<b>lb</b>/&gt;</u>dificulta y embaraza a la precisa</div>
</div>

<svg width="1920" height="1080" style="pointer-events:none"><text x="422" y="241" style="font-size:18px;font-weight:bold;fill:#ee0000" textLength="15">3.</text></svg>
</body></html>
